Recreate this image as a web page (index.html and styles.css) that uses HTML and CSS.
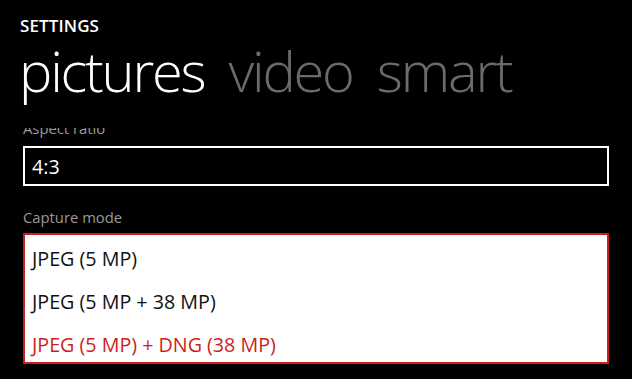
FILE: index.html
```html
<!DOCTYPE html>
<html lang="en">
<head>
<meta charset="utf-8">
<title>Settings</title>
<link rel="stylesheet" href="styles.css">
</head>
<body>
<div class="app">
  <div class="app-title">SETTINGS</div>
  <div class="pivot">
    <span class="pivot-item active">pictures</span>
    <span class="pivot-item">video</span>
    <span class="pivot-item">smart</span>
  </div>
  <div class="viewport">
    <div class="content">
      <div class="label label-clipped">Aspect ratio</div>
      <div class="picker">4:3</div>
      <div class="label label-capture">Capture mode</div>
      <div class="listpicker">
        <div class="option">JPEG (5 MP)</div>
        <div class="option">JPEG (5 MP + 38 MP)</div>
        <div class="option selected">JPEG (5 MP) + DNG (38 MP)</div>
      </div>
    </div>
  </div>
</div>
</body>
</html>
```

FILE: styles.css
```css
html, body {
  margin: 0;
  padding: 0;
  background: #000;
}

body {
  width: 632px;
  height: 379px;
  overflow: hidden;
  font-family: "Open Sans", "Noto Sans", sans-serif;
  color: #fff;
}

.app {
  padding-top: 16px;
}

.app-title {
  padding-left: 20px;
  font-size: 17px;
  font-weight: 600;
  line-height: 20px;
  letter-spacing: 0.1px;
}

.pivot {
  margin-top: 4px;
  padding-left: 19px;
  display: flex;
  gap: 24px;
  font-size: 56px;
  font-weight: 300;
  line-height: 60px;
  letter-spacing: -2.2px;
  white-space: nowrap;
}

.pivot-item {
  color: #6b6b6b;
}

.pivot-item.active {
  color: #fff;
}

.viewport {
  margin-top: 28px;
  height: 251px;
  overflow: hidden;
}

.content {
  padding: 0 23px;
}

.label {
  font-size: 14.8px;
  line-height: 20px;
  color: #9a9a9a;
}

.label-clipped {
  margin-top: -10px;
}

.label-capture {
  margin-top: 21px;
}

.picker {
  margin-top: 8px;
  box-sizing: border-box;
  height: 40px;
  border: 2px solid #fff;
  padding: 2px 7px 0;
  font-size: 19.7px;
  line-height: 34px;
  color: #fff;
}

.listpicker {
  margin-top: 6px;
  box-sizing: border-box;
  height: 131px;
  overflow: hidden;
  border: 2px solid #cc1f1c;
  background: #fff;
  padding: 2px 7px 0;
}

.option {
  font-size: 19.7px;
  line-height: 43px;
  color: #111;
}

.option.selected {
  color: #cc1f1c;
}
```
